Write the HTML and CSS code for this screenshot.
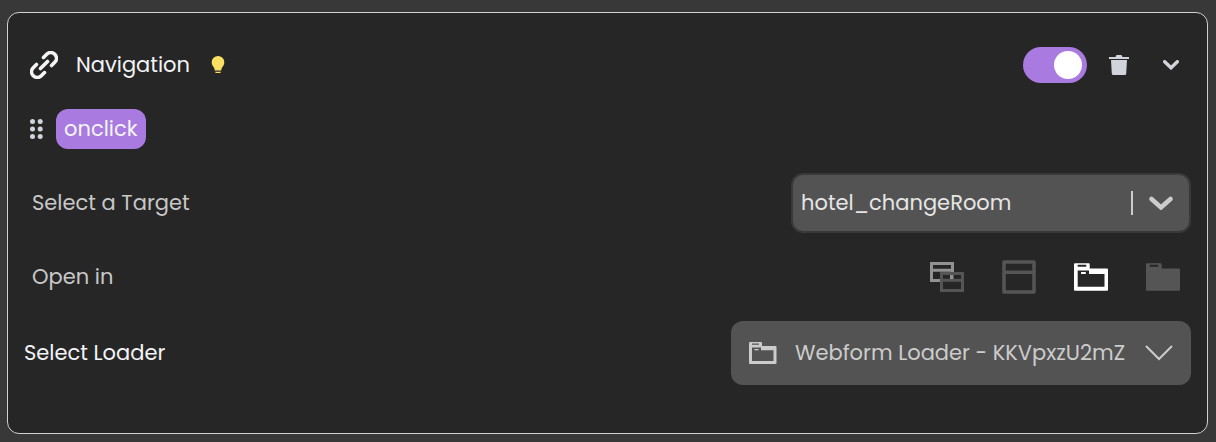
FILE: index.html
```html
<!DOCTYPE html>
<html lang="en">
<head>
<meta charset="utf-8">
<meta name="viewport" content="width=device-width, initial-scale=1">
<title>Navigation</title>
<link rel="stylesheet" href="styles.css">
</head>
<body>
<main class="card">
  <header class="header">
    <svg class="icon-link" viewBox="0 0 28 28" aria-hidden="true">
      <g transform="rotate(-45 14 14)" fill="none" stroke="currentColor" stroke-width="3.600" stroke-linecap="round">
        <path d="M9 8.300H4.500a5.700 5.700 0 0 0 0 11.400H9M19 8.300h4.500a5.700 5.700 0 0 1 0 11.400H19M9 14h10"/>
      </g>
    </svg>
    <h1 class="title">Navigation</h1>
    <svg class="icon-bulb" viewBox="0 0 14 18" aria-hidden="true">
      <path d="M7 0a6.300 6.300 0 0 1 6.300 6.300c0 2.500-1.300 3.900-2.200 5.200-.5.800-.7 1.600-.8 3H3.700c-.1-1.400-.3-2.200-.8-3C2 10.200.7 8.800.7 6.300A6.300 6.300 0 0 1 7 0zM4 15.700h6a1.500 1.300 0 0 1-1.500 1.300h-3A1.500 1.300 0 0 1 4 15.700z" fill="currentColor"/>
    </svg>
    <input class="toggle" type="checkbox" role="switch" aria-label="Enable navigation" checked>
    <button class="icon-button trash" type="button" aria-label="Delete">
      <svg viewBox="0 0 20 20" width="20" height="20" aria-hidden="true">
        <path d="M0 2h6.500l1-2h5l1 2H20v2H0zM2 5h16l-.8 13.500a1.500 1.500 0 0 1-1.500 1.500H4.300a1.500 1.500 0 0 1-1.500-1.500z" fill="currentColor"/>
      </svg>
    </button>
    <button class="icon-button" type="button" aria-label="Collapse">
      <svg viewBox="0 0 16 10" width="16" height="10" aria-hidden="true">
        <path d="M1.700 1.700 8 7.800l6.300-6.100" fill="none" stroke="currentColor" stroke-width="3.400" stroke-linecap="round"/>
      </svg>
    </button>
  </header>

  <div class="event">
    <svg class="icon-grip" viewBox="0 0 14 20" aria-hidden="true">
      <g fill="currentColor">
        <circle cx="2.500" cy="2.500" r="2.500"/><circle cx="10.200" cy="2.500" r="2.500"/>
        <circle cx="2.500" cy="10" r="2.500"/><circle cx="10.200" cy="10" r="2.500"/>
        <circle cx="2.500" cy="17.500" r="2.500"/><circle cx="10.200" cy="17.500" r="2.500"/>
      </g>
    </svg>
    <span class="chip">onclick</span>
  </div>

  <div class="row row-target">
    <label class="label" for="target">Select a Target</label>
    <div class="field field-target">
      <select class="select" id="target"><option>hotel_changeRoom</option></select>
      <span class="divider"></span>
      <svg class="icon-chevron-bold" viewBox="0 0 24 14" aria-hidden="true">
        <path d="M2.500 3 12 11.500 21.500 3" fill="none" stroke="currentColor" stroke-width="4.500" stroke-linecap="round"/>
      </svg>
    </div>
  </div>

  <div class="row row-open" role="radiogroup" aria-labelledby="open-in">
    <span class="label" id="open-in">Open in</span>
    <div class="modes">
      <label class="mode">
        <input class="mode-input" type="radio" name="open" aria-label="New window">
        <svg viewBox="0 0 36 36" aria-hidden="true">
          <path d="M2.500 4.500h21v17h-21zM2.500 11.300h21" fill="none" stroke="#929292" stroke-width="3"/>
          <path d="M12.500 14.500h21v17h-21z" fill="#262626" stroke="#555" stroke-width="3"/>
          <path d="M12.500 21.300h21" stroke="#555" stroke-width="3"/>
          <path d="M21 16h3.500v4H21z" fill="#929292"/>
        </svg>
      </label>
      <label class="mode">
        <input class="mode-input" type="radio" name="open" aria-label="Same window">
        <svg viewBox="0 0 36 36" aria-hidden="true">
          <path d="M3 3h30v30H3zM3 13.300h30" fill="none" stroke="currentColor" stroke-width="3.500" stroke-linejoin="round"/>
        </svg>
      </label>
      <label class="mode">
        <input class="mode-input" type="radio" name="open" aria-label="New tab" checked>
        <svg viewBox="0 0 36 36" aria-hidden="true">
          <path fill-rule="evenodd" d="M2 4.200h13.700a1 1 0 0 1 1 1v4.300H34a1 1 0 0 1 1 1v20.300a1 1 0 0 1-1 1H2a1 1 0 0 1-1-1V5.200a1 1 0 0 1 1-1zM4.700 5.800v2h8.600v-2zM4.700 11.500v16.300h26.800V15H16v-3.500z" fill="currentColor"/>
          <path d="M8 13h4.800v2H8z" fill="currentColor"/>
        </svg>
      </label>
      <label class="mode">
        <input class="mode-input" type="radio" name="open" aria-label="Same tab">
        <svg viewBox="0 0 36 36" aria-hidden="true">
          <path fill-rule="evenodd" d="M2 4.200h13.700a1 1 0 0 1 1 1v4.300H34a1 1 0 0 1 1 1v20.300a1 1 0 0 1-1 1H2a1 1 0 0 1-1-1V5.200a1 1 0 0 1 1-1zM4.700 5.800v2h8.600v-2z" fill="currentColor"/>
        </svg>
      </label>
    </div>
  </div>

  <div class="row">
    <label class="label label-strong" for="loader">Select Loader</label>
    <div class="field field-loader">
      <svg class="icon-folder" viewBox="0 0 28 22" aria-hidden="true">
        <path fill-rule="evenodd" d="M1 0h11a1 1 0 0 1 1 1v3h13.500a1 1 0 0 1 1 1v16a1 1 0 0 1-1 1H1a1 1 0 0 1-1-1V1a1 1 0 0 1 1-1zM3 1.500v1.300h7V1.500zM3 5.500V19h21.500V8.200H12V5.500z" fill="currentColor"/>
        <path d="M5.500 7h4v1.300h-4z" fill="currentColor"/>
      </svg>
      <select class="select" id="loader"><option>Webform Loader - KKVpxzU2mZ</option></select>
      <svg class="icon-chevron" viewBox="0 0 28 16" aria-hidden="true">
        <path d="M1.500 1.500 14 14 26.500 1.500" fill="none" stroke="currentColor" stroke-width="2" stroke-linecap="round"/>
      </svg>
    </div>
  </div>
</main>
</body>
</html>
```
FILE: styles.css
```css
* { box-sizing: border-box; }

body {
  margin: 0;
  padding: 12px 8px 8px 7px;
  background: #383838;
  color: #f3f4f6;
  font: 400 21px/28px Poppins, Inter, sans-serif;
}

svg { display: block; flex: none; }

.card {
  padding: 34px 16px 48px;
  border: 1px solid #d0d0d0;
  border-radius: 12px;
  background: #262626;
}

.header {
  display: flex;
  align-items: center;
  padding: 0 12px 0 6px;
}

.icon-link { width: 28px; height: 28px; }

.title {
  margin: 0 21px 0 18px;
  font: inherit;
}

.icon-bulb { width: 14px; height: 18px; color: #fbdf63; }

.toggle {
  appearance: none;
  display: flex;
  justify-content: flex-end;
  align-items: center;
  width: 64px;
  height: 36px;
  margin: 0 22px 0 auto;
  padding: 0 5px;
  border-radius: 18px;
  background: #a97ae0;
}

.toggle::before {
  content: "";
  width: 28px;
  height: 28px;
  border-radius: 50%;
  background: #fff;
}

.toggle:not(:checked) { justify-content: flex-start; background: #555; }

.icon-button {
  padding: 0;
  border: 0;
  background: none;
  color: #d1d5db;
}

.trash { margin-right: 34px; }

.event {
  display: flex;
  align-items: center;
  gap: 12px;
  margin-top: 26px;
  padding-left: 6px;
}

.icon-grip { width: 14px; height: 20px; color: #d1d5db; }

.chip {
  padding: 6px 8px;
  border-radius: 12px;
  background: #a97ae0;
}

.row {
  display: flex;
  align-items: center;
  justify-content: space-between;
}

.row-target { margin-top: 24px; padding-left: 8px; }

.row-open {
  height: 44px;
  margin: 22px 0;
  padding: 0 10px 0 8px;
}

.label { color: #c8c8c8; }
.label-strong { color: #f3f4f6; }

.field {
  display: flex;
  align-items: center;
  border-radius: 12px;
  background: #535353;
  color: #cccccc;
}

.field-target {
  width: 400px;
  height: 60px;
  padding: 0 16px 0 8px;
  border: 2px solid #393939;
}

.field-target .select { color: #e6e6e6; }

.field-loader {
  width: 460px;
  height: 64px;
  padding: 0 18px;
}

.select {
  appearance: none;
  flex: 1;
  min-width: 0;
  height: 40px;
  padding: 0;
  border: 0;
  background: none;
  color: inherit;
  font: inherit;
}

.divider {
  width: 2px;
  height: 24px;
  margin-right: 16px;
  background: #cccccc;
}

.icon-chevron-bold { width: 24px; height: 14px; }
.icon-folder { width: 28px; height: 22px; margin-right: 18px; }
.icon-chevron { width: 28px; height: 16px; }

.modes { display: flex; gap: 36px; }

.mode { color: #555; }
.mode:has(:checked) { color: #fff; }
.mode svg { width: 36px; height: 36px; }

.mode-input {
  position: absolute;
  margin: 0;
  opacity: 0;
}
```
